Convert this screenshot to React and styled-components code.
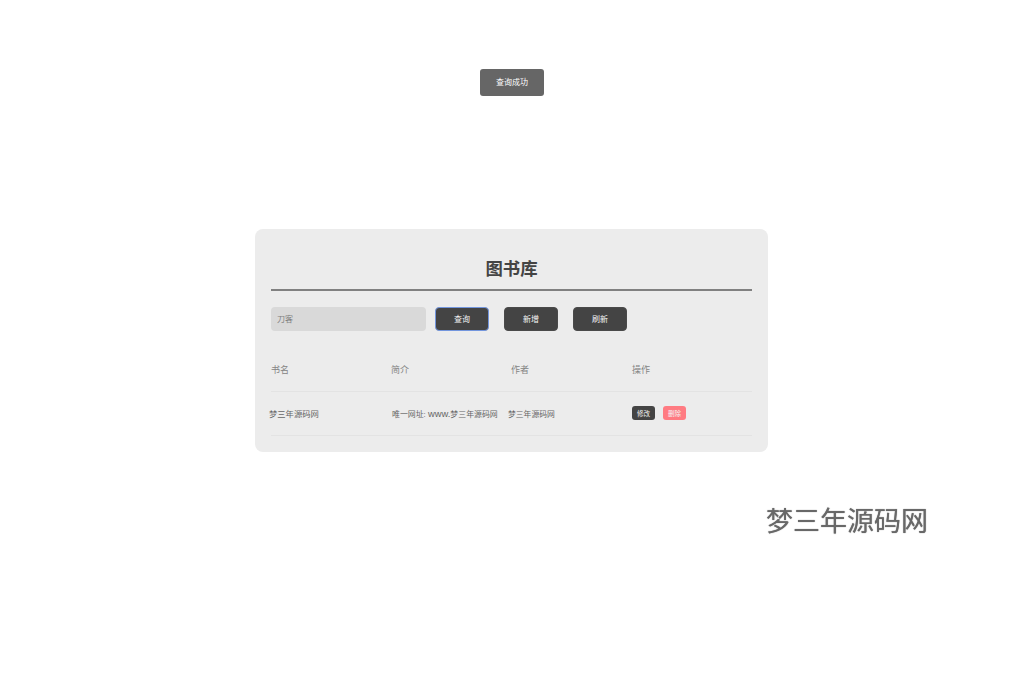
import React from "react";
import styled, { createGlobalStyle } from "styled-components";

const GlobalStyle = createGlobalStyle`
    html, body {
        margin: 0;
        padding: 0;
        background: #fff;
        font-family: "Liberation Sans", "Noto Sans CJK SC", sans-serif;
    }
`;

const Page = styled.div`
    box-sizing: border-box;
    min-height: 679px;
    padding-right: 1px;
    display: flex;
    align-items: center;
    justify-content: center;
`;

const Toast = styled.div`
    position: fixed;
    top: 69px;
    left: 480px;
    width: 64px;
    height: 26.5px;
    padding-bottom: 1px;
    box-sizing: border-box;
    border-radius: 3px;
    background: #666;
    color: #fff;
    font-size: 8px;
    display: flex;
    align-items: center;
    justify-content: center;
`;

const Watermark = styled.div`
    position: fixed;
    top: 501px;
    left: 766px;
    color: #686868;
    font-family: "Noto Sans CJK SC", sans-serif;
    font-size: 27px;
    font-weight: 400;
    line-height: 37px;
    white-space: nowrap;
    text-shadow: 0 0 1px #707070;
`;

const Card = styled.div`
    box-sizing: border-box;
    width: 513px;
    height: 223px;
    margin-top: 2px;
    padding: 28px 16px 0;
    background: #ececec;
    border-radius: 8px;
`;

const Title = styled.h2`
    margin: 0;
    height: 32px;
    line-height: 24px;
    border-bottom: 2px solid #808080;
    box-sizing: content-box;
    text-align: center;
    font-size: 17.4px;
    font-weight: bold;
    color: #444;
`;

const Toolbar = styled.div`
    display: flex;
    align-items: center;
    margin-top: 16px;
`;

const SearchInput = styled.input`
    box-sizing: border-box;
    width: 155px;
    height: 24px;
    padding: 0 6px 2px;
    margin-right: 9px;
    border: none;
    outline: none;
    border-radius: 4px;
    background: #d9d9d9;
    font-family: inherit;
    font-size: 8px;
    color: #808080;
`;

const Button = styled.button`
    box-sizing: border-box;
    width: 54px;
    height: 24px;
    margin-right: ${(p) => p.$gap}px;
    padding: 0 0 2px;
    border: ${(p) => (p.$focused ? "1.5px solid #7396de" : "1px solid #4a4a4a")};
    border-radius: 4px;
    background: #444;
    color: #f4f4f4;
    font-family: inherit;
    font-size: 8px;
`;

const Table = styled.div`
    margin-top: 16px;
`;

const Row = styled.div`
    box-sizing: border-box;
    display: grid;
    grid-template-columns: 120px 120px 121px 120px;
    align-items: center;
    height: 45px;
    margin-top: ${(p) => (p.$first ? 0 : -1)}px;
    border-bottom: 1px solid #e3e3e3;
`;

const HeadCell = styled.div`
    font-size: 9px;
    color: #848484;
`;

const Cell = styled.div`
    margin-left: ${(p) => p.$shift || 0}px;
    font-size: ${(p) => p.$size}px;
    color: #666;
    white-space: nowrap;
`;

const Domain = styled.span`
    font-size: 9.4px;
`;

const Actions = styled.div`
    display: flex;
    gap: 8px;
`;

const Tag = styled.span`
    width: 23px;
    height: 14px;
    border-radius: 3px;
    background: ${(p) => (p.$danger ? "#ff7b82" : "#444")};
    color: #f4f4f4;
    font-size: 6.5px;
    display: flex;
    align-items: center;
    justify-content: center;
`;

const App = () => {
    return (
        <Page>
            <GlobalStyle />
            <Toast>查询成功</Toast>
            <Card>
                <Title>图书库</Title>
                <Toolbar>
                    <SearchInput defaultValue="刀客" />
                    <Button $focused $gap={15}>查询</Button>
                    <Button $gap={15}>新增</Button>
                    <Button $gap={0}>刷新</Button>
                </Toolbar>
                <Table>
                    <Row $first>
                        <HeadCell>书名</HeadCell>
                        <HeadCell>简介</HeadCell>
                        <HeadCell>作者</HeadCell>
                        <HeadCell>操作</HeadCell>
                    </Row>
                    <Row>
                        <Cell $shift={-2} $size={8.3}>梦三年源码网</Cell>
                        <Cell $shift={1} $size={7.9}>唯一网址: <Domain>www.</Domain>梦三年源码网</Cell>
                        <Cell $shift={-3} $size={7.8}>梦三年源码网</Cell>
                        <Actions>
                            <Tag>修改</Tag>
                            <Tag $danger>删除</Tag>
                        </Actions>
                    </Row>
                </Table>
            </Card>
            <Watermark>梦三年源码网</Watermark>
        </Page>
    );
};

export default App;
